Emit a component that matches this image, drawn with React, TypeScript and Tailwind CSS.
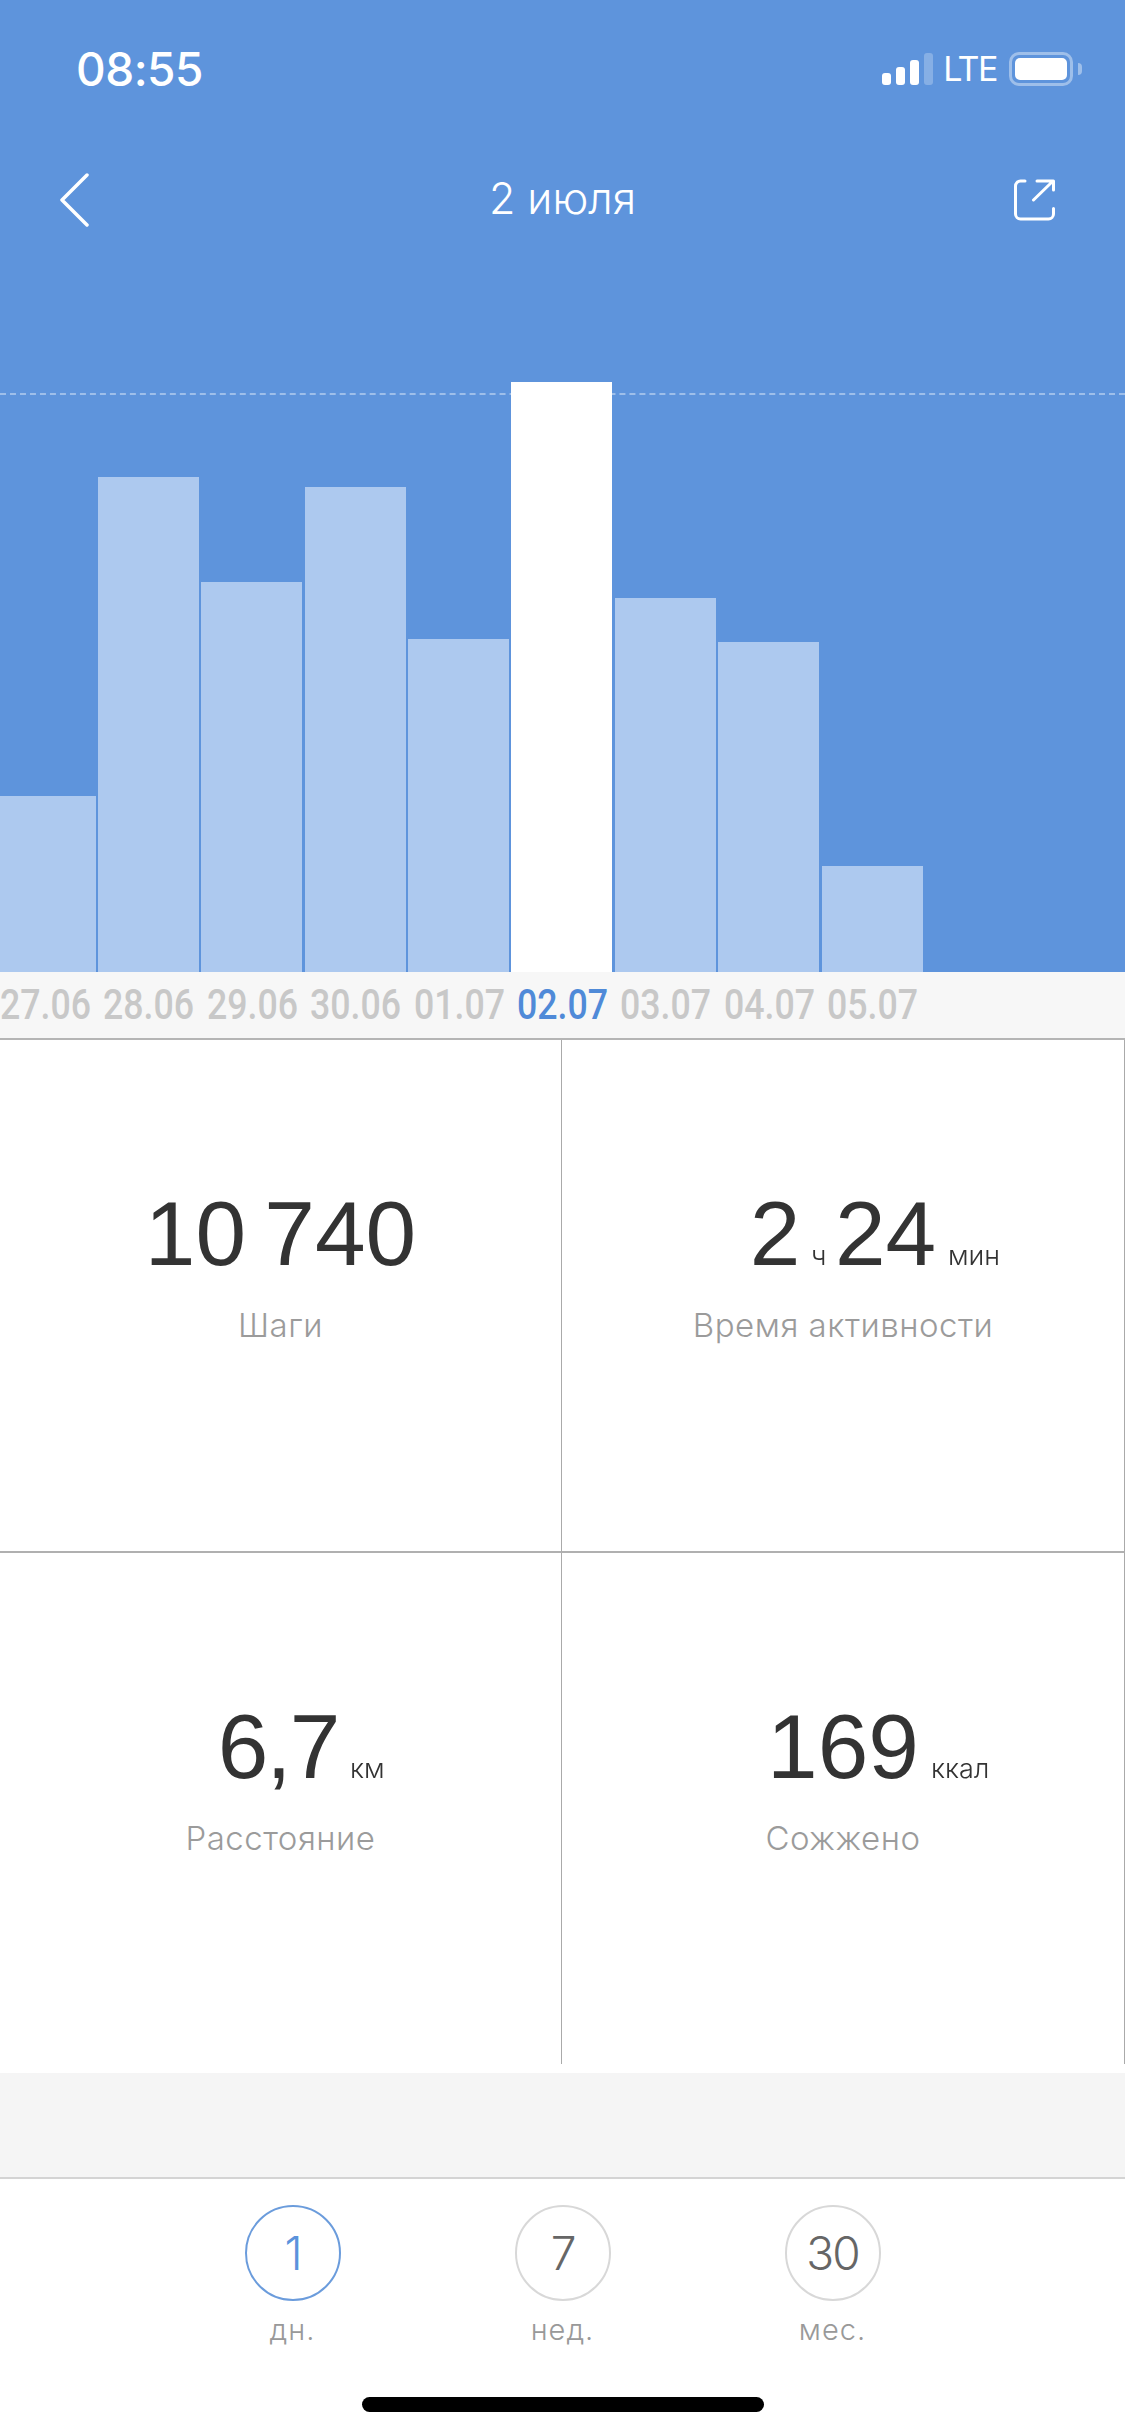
import type { ReactNode } from "react";

const BARS = [
  { label: "27.06", height: 176, width: 95.5 },
  { label: "28.06", height: 495 },
  { label: "29.06", height: 390 },
  { label: "30.06", height: 485 },
  { label: "01.07", height: 333 },
  { label: "02.07", height: 590, active: true },
  { label: "03.07", height: 374 },
  { label: "04.07", height: 330 },
  { label: "05.07", height: 106 },
];

function Stat({
  label,
  children,
  rightBorder,
}: {
  label: string;
  children: ReactNode;
  rightBorder?: boolean;
}) {
  return (
    <div className={`flex h-[511px] flex-col items-center pt-[144px] ${rightBorder ? "border-r border-[#aaaaaa]" : ""}`}>
      <div className="h-[100px] whitespace-nowrap font-['Liberation_Sans',sans-serif] text-[91px] leading-[100px] text-[#333333] [word-spacing:-7px]">
        {children}
      </div>
      <div className="mt-[21px] font-['Inter',sans-serif] text-[33px] leading-[40px] font-light tracking-[0.5px] text-[#9b9b9b]">
        {label}
      </div>
    </div>
  );
}

function Unit({ children, last }: { children: string; last?: boolean }) {
  return (
    <span
      className={`inline-block font-['Inter',sans-serif] text-[27px] font-light tracking-normal text-[#333333] will-change-transform ${
        last ? "mr-[-12px] ml-[12px] w-0" : "mr-[8px] ml-[11px]"
      }`}
    >
      {children}
    </span>
  );
}

function Period({ value, unit, active }: { value: string; unit: string; active?: boolean }) {
  return (
    <div className="flex w-[96px] flex-col items-center">
      <div
        className={`flex h-[96px] w-[96px] items-center justify-center rounded-full border-2 font-['Inter',sans-serif] text-[46px] font-light tracking-[-2px] ${
          active ? "border-[#6b9cdc] text-[#5b93dc]" : "border-[#d8d8d8] text-[#666666]"
        }`}
      >
        {value}
      </div>
      <div className="mt-[11px] font-['Inter',sans-serif] text-[29px] leading-[36px] font-light tracking-[1px] text-[#999999]">
        {unit}
      </div>
    </div>
  );
}

export default function App() {
  return (
    <div className="flex h-[2436px] w-[1125px] flex-col overflow-hidden bg-white">
      {/* blue header + chart */}
      <div className="relative flex h-[972px] flex-none flex-col bg-[#5e94dc] text-white">
        <div className="mt-[46px] flex h-[46px] flex-none items-center justify-between pr-[43px] pl-[76px]">
          <span className="font-['Inter',sans-serif] text-[46px] font-medium tracking-[-0.5px]">08:55</span>
          <div className="flex items-center">
            <div className="flex h-[32px] items-end gap-[5px]">
              <span className="h-[12px] w-[9px] rounded-[3px] bg-white" />
              <span className="h-[18px] w-[9px] rounded-[3px] bg-white" />
              <span className="h-[25px] w-[9px] rounded-[3px] bg-white" />
              <span className="h-[32px] w-[9px] rounded-[3px] bg-white/25" />
            </div>
            <span className="ml-[10px] font-['Inter',sans-serif] text-[34px] leading-none tracking-[-1.5px]">LTE</span>
            <div className="ml-[12px] h-[34px] w-[64px] rounded-[10px] border-[3px] border-white/40 p-[3px]">
              <div className="h-full w-full rounded-[5px] bg-white" />
            </div>
            <span className="ml-[5px] h-[12px] w-[4px] rounded-r-full bg-white/40" />
          </div>
        </div>

        <div className="mt-[68px] grid h-[80px] flex-none grid-cols-3 items-center px-[64px]">
          <svg className="-ml-[5px]" width="30" height="54" viewBox="0 0 30 54" fill="none" stroke="white" strokeWidth="3.5" strokeLinecap="round" strokeLinejoin="round">
            <path d="M28 2 3 27l25 25" />
          </svg>
          <div className="-mt-[3px] text-center font-['Inter',sans-serif] text-[43px] leading-none font-light">2 июля</div>
          <svg className="mr-[5px] justify-self-end" width="42" height="42" viewBox="0 0 42 42" fill="none" stroke="white" strokeWidth="3" strokeLinecap="round" strokeLinejoin="round">
            <path d="M11 2H6.5a5 5 0 0 0-5 5v28a5 5 0 0 0 5 5h28a5 5 0 0 0 5-5v-5.5" />
            <path d="M19.5 21 39 2M23 2h16.5v9" />
          </svg>
        </div>

        {/* goal line, the bars paint over it */}
        <div className="absolute top-[393px] right-0 left-0 border-t-2 border-dashed border-white/40" />

        <div className="relative flex flex-1 items-end gap-[2.4px]">
          {BARS.map((b) => (
            <div
              key={b.label}
              className={b.active ? "bg-white" : "bg-[#adc9ef]"}
              style={{ height: b.height, width: b.width ?? 101, flex: "none" }}
            />
          ))}
        </div>
      </div>

      {/* date labels */}
      <div className="flex h-[66px] flex-none items-center bg-[#f7f7f7] font-['Roboto',sans-serif]">
        {BARS.map((b) => (
          <div key={b.label} className="w-[103.4px] flex-none">
            <div className={`origin-left scale-x-[0.85] text-[42px] leading-none font-medium ${b.active ? "text-[#4f8ad8]" : "text-[#c8c8c8]"}`}>
              {b.label}
            </div>
          </div>
        ))}
      </div>

      {/* stats grid */}
      <div className="grid flex-none grid-cols-[562px_563px] border-t-2 border-[#b5b5b5]">
        <div className="border-r border-b-2 border-r-[#aaaaaa] border-b-[#b0b0b0]">
          <Stat label="Шаги">10 740</Stat>
        </div>
        <div className="border-r border-b-2 border-r-[#aaaaaa] border-b-[#b0b0b0]">
          <Stat label="Время активности">
            2<Unit>ч</Unit>24<Unit last>мин</Unit>
          </Stat>
        </div>
        <Stat label="Расстояние" rightBorder>
          <span className="-ml-[5px] tracking-[-2px]">6,7</span>
          <Unit last>км</Unit>
        </Stat>
        <Stat label="Сожжено" rightBorder>
          169<Unit last>ккал</Unit>
        </Stat>
      </div>

      <div className="mt-[9px] h-[106px] flex-none border-b-2 border-[#d4d4d4] bg-[#f5f5f5]" />

      {/* period picker */}
      <div className="mt-[26px] flex flex-none justify-center gap-[174px]">
        <Period value="1" unit="дн." active />
        <Period value="7" unit="нед." />
        <Period value="30" unit="мес." />
      </div>

      <div className="mx-auto mt-[49px] h-[15px] w-[402px] flex-none rounded-full bg-black" />
    </div>
  );
}
